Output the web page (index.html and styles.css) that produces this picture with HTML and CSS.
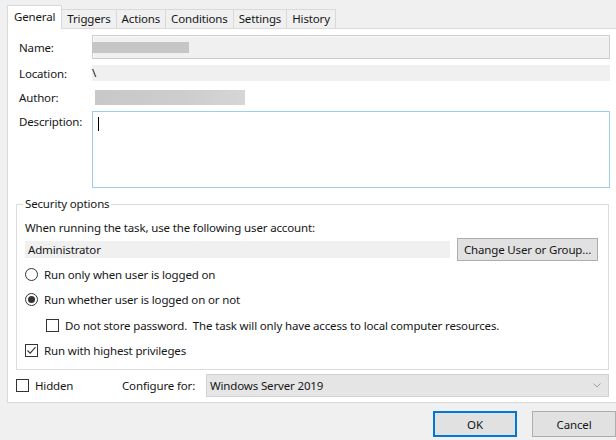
FILE: index.html
```html
<!DOCTYPE html>
<html lang="en">
<head>
  <meta charset="UTF-8">
  <title>Task Properties - General</title>
  <link rel="stylesheet" href="styles.css">
</head>
<body>
  <div class="dialog">
    <div class="tabs">
      <div class="tab active">General</div>
      <div class="tab">Triggers</div>
      <div class="tab">Actions</div>
      <div class="tab">Conditions</div>
      <div class="tab">Settings</div>
      <div class="tab">History</div>
    </div>

    <div class="page">
      <div class="row name-row">
        <span class="label">Name:</span>
        <div class="input"><span class="blur blur-name"></span></div>
      </div>
      <div class="row location-row">
        <span class="label">Location:</span>
        <div class="readonly">\</div>
      </div>
      <div class="row author-row">
        <span class="label">Author:</span>
        <div class="plain"><span class="blur blur-author"></span></div>
      </div>
      <div class="row desc-row">
        <span class="label">Description:</span>
        <div class="textarea"><span class="caret"></span></div>
      </div>

      <fieldset class="security">
        <legend>Security options</legend>
        <div class="account-label">When running the task, use the following user account:</div>
        <div class="account-row">
          <div class="account">Administrator</div>
          <button class="btn change-btn">Change User or Group...</button>
        </div>
        <div class="option opt-first"><span class="radio"></span>Run only when user is logged on</div>
        <div class="option"><span class="radio checked"></span>Run whether user is logged on or not</div>
        <div class="option sub"><span class="check"></span>Do not store password.&nbsp; The task will only have access to local computer resources.</div>
        <div class="option"><span class="check"><svg width="11" height="11" viewBox="0 0 11 11"><path d="M1.5 5.5 L4.2 8.2 L9.5 2.2" fill="none" stroke="#333" stroke-width="1.1"/></svg></span>Run with highest privileges</div>
      </fieldset>

      <div class="bottom-row">
        <div class="option hidden-opt"><span class="check"></span>Hidden</div>
        <span class="configure-label">Configure for:</span>
        <div class="combo">
          <span>Windows Server 2019</span>
          <svg width="8" height="5" viewBox="0 0 8 5"><path d="M0.5 0.5 L4 4 L7.5 0.5" fill="none" stroke="#a0a0a0" stroke-width="1"/></svg>
        </div>
      </div>
    </div>

    <div class="buttons">
      <button class="btn dlg-btn default">OK</button>
      <button class="btn dlg-btn">Cancel</button>
    </div>
  </div>
</body>
</html>
```
FILE: styles.css
```css
/* Base */
body {
  margin: 0;
  background: #f0f0f0;
  font-family: 'Noto Sans', 'Open Sans', sans-serif;
  font-size: 11.5px;
  letter-spacing: -0.15px;
  color: #161616;
  overflow: hidden;
}

.dialog {
  padding: 5px 0 0 7px;
  width: 612px;
}

/* Tabs */
.tabs {
  display: flex;
  align-items: flex-end;
  height: 23px;
}

.tab {
  height: 19px;
  line-height: 18px;
  padding: 0 5px;
  border: 1px solid #d9d9d9;
  border-bottom: none;
  margin-left: -1px;
  background: #f0f0f0;
  box-sizing: border-box;
}

.tab.active {
  height: 24px;
  line-height: 22px;
  margin-left: 0;
  margin-bottom: -1px;
  padding: 0 6px;
  background: #fff;
  position: relative;
  z-index: 1;
}

/* Tab page */
.page {
  background: #fff;
  border: 1px solid #d9d9d9;
  padding: 6px 8px 5px 11px;
}

.row {
  display: flex;
  align-items: center;
}

.label {
  width: 73px;
  flex-shrink: 0;
}

.name-row {
  height: 24px;
}

.input {
  flex: 1;
  height: 24px;
  box-sizing: border-box;
  border: 1px solid #cdcdcd;
  box-shadow: inset 1px 1px 0 #fafafa;
  background: #f0f0f0;
}

.blur {
  display: block;
  background: #c6c6c6;
}

.blur-name {
  width: 97px;
  height: 11px;
  margin: 6px 0 0 -1px;
}

.location-row {
  height: 16px;
  margin-top: 6px;
}

.readonly {
  flex: 1;
  height: 16px;
  line-height: 16px;
  background: #f0f0f0;
}

.author-row {
  height: 16px;
  margin-top: 8px;
}

.plain {
  flex: 1;
  height: 16px;
}

.blur-author {
  width: 150px;
  height: 15px;
  margin: 1px 0 0 3px;
  background: linear-gradient(to right, #c8c8c8, #cdcdcd 60%, #d6d6d6);
}

.desc-row {
  align-items: flex-start;
  margin-top: 6px;
}

.desc-row .label {
  margin-top: 3px;
}

.textarea {
  flex: 1;
  height: 77px;
  box-sizing: border-box;
  border: 1px solid #9ecbf0;
  padding: 5px 0 0 5px;
}

.caret {
  display: block;
  width: 1px;
  height: 14px;
  background: #000;
}

/* Security options */
.security {
  margin: 8px 1px 0 -3px;
  padding: 8px 8px 9px 8px;
  border: 1px solid #dcdcdc;
  min-width: 0;
}

.security legend {
  padding: 0 2px;
  margin-left: -2px;
  line-height: 16px;
}

.account-label {
  line-height: 16px;
}

.account-row {
  display: flex;
  align-items: center;
  height: 23px;
  margin-top: 2px;
}

.account {
  width: 422px;
  height: 17px;
  line-height: 17px;
  padding-left: 3px;
  background: #f0f0f0;
}

.btn {
  font-family: inherit;
  font-size: inherit;
  letter-spacing: inherit;
  color: #161616;
  background: #e1e1e1;
  border: 1px solid #adadad;
  padding: 0;
}

.change-btn {
  margin-left: 7px;
  width: 141px;
  height: 23px;
}

.option {
  display: flex;
  align-items: center;
  height: 20px;
  margin-top: 5px;
}

.opt-first {
  margin-top: 3px;
}

.option.sub {
  margin-left: 21px;
  margin-top: 6px;
}

.radio {
  width: 13px;
  height: 13px;
  box-sizing: border-box;
  border: 1px solid #333;
  border-radius: 50%;
  margin-right: 6px;
  display: flex;
  align-items: center;
  justify-content: center;
}

.radio.checked::after {
  content: "";
  width: 7px;
  height: 7px;
  border-radius: 50%;
  background: #333;
}

.check {
  width: 13px;
  height: 13px;
  box-sizing: border-box;
  border: 1px solid #333;
  margin-right: 6px;
  display: flex;
  align-items: center;
  justify-content: center;
}

/* Bottom row */
.bottom-row {
  display: flex;
  align-items: center;
  height: 23px;
  margin: 4px 1px 0 -3px;
}

.hidden-opt {
  margin-top: 0;
  width: 106px;
}

.configure-label {
  width: 84px;
}

.combo {
  flex: 1;
  height: 23px;
  box-sizing: border-box;
  border: 1px solid #d2d2d2;
  background: #e5e5e5;
  display: flex;
  align-items: center;
  justify-content: space-between;
  padding: 0 7px 0 3px;
}

/* Dialog buttons */
.buttons {
  display: flex;
  justify-content: flex-end;
  gap: 15px;
  margin-top: 8px;
  padding-right: 3px;
}

.dlg-btn {
  width: 84px;
  height: 26px;
}

.dlg-btn.default {
  border: 2px solid #0078d7;
}
```
